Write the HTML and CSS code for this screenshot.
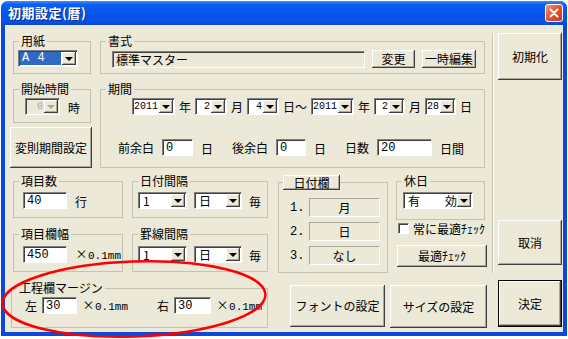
FILE: index.html
```html
<!DOCTYPE html>
<html lang="ja">
<head>
    <meta charset="UTF-8">
    <meta name="viewport" content="width=device-width, initial-scale=1.0">
    <title>初期設定(暦)</title>
    <link rel="stylesheet" href="styles.css">
</head>
<body>
    <div class="window">
        <div class="titlebar">
            <span class="title">初期設定(暦)</span>
            <span class="close">
                <svg width="10" height="10" viewBox="0 0 10 10"><path d="M1.5 1.5L8.5 8.5M8.5 1.5L1.5 8.5" stroke="#fff" stroke-width="2" stroke-linecap="round"/></svg>
            </span>
        </div>

        <div class="client">
            <div class="main">
                <!-- 用紙 / 書式 -->
                <div class="row row-a">
                    <fieldset class="group g-paper">
                        <legend>用紙</legend>
                        <div class="line">
                            <div class="combo w60"><span class="val sel">A 4</span><span class="arrow"></span></div>
                        </div>
                    </fieldset>
                    <fieldset class="group g-format">
                        <legend>書式</legend>
                        <div class="line">
                            <div class="field ro">標準マスター</div>
                            <button class="btn b-change">変更</button>
                            <button class="btn b-temp">一時編集</button>
                        </div>
                    </fieldset>
                </div>

                <!-- 開始時間 / 期間 -->
                <div class="row row-b">
                    <div class="col col-left">
                        <fieldset class="group g-start">
                            <legend>開始時間</legend>
                            <div class="line">
                                <div class="combo dis w35"><span class="val num">0</span><span class="arrow"></span></div>
                                <span class="unit">時</span>
                            </div>
                        </fieldset>
                        <button class="btn b-irregular">変則期間設定</button>
                    </div>
                    <fieldset class="group g-period">
                        <legend>期間</legend>
                        <div class="line period-top">
                            <div class="combo w43"><span class="val num">2011</span><span class="arrow"></span></div>
                            <span>年</span>
                            <div class="combo w32"><span class="val num">2</span><span class="arrow"></span></div>
                            <span>月</span>
                            <div class="combo w32"><span class="val num">4</span><span class="arrow"></span></div>
                            <span>日～</span>
                            <div class="combo w43"><span class="val num">2011</span><span class="arrow"></span></div>
                            <span>年</span>
                            <div class="combo w31"><span class="val num">2</span><span class="arrow"></span></div>
                            <span>月</span>
                            <div class="combo w31"><span class="val num">28</span><span class="arrow"></span></div>
                            <span>日</span>
                        </div>
                        <div class="line period-bottom">
                            <span>前余白</span>
                            <div class="field w31">0</div>
                            <span class="unit">日</span>
                            <span class="sp">後余白</span>
                            <div class="field w30">0</div>
                            <span class="unit">日</span>
                            <span class="sp">日数</span>
                            <div class="field w55">20</div>
                            <span class="unit">日間</span>
                        </div>
                    </fieldset>
                </div>

                <!-- 項目 / 間隔 / 日付欄 / 休日 -->
                <div class="row row-c">
                    <div class="col col-1">
                        <fieldset class="group g-top">
                            <legend>項目数</legend>
                            <div class="line in-1">
                                <div class="field w44">40</div>
                                <span class="unit">行</span>
                            </div>
                        </fieldset>
                        <fieldset class="group g-bottom">
                            <legend>項目欄幅</legend>
                            <div class="line in-1">
                                <div class="field w44">450</div>
                                <span class="unit mm"><span class="x">×</span><span class="num">0.1mm</span></span>
                            </div>
                        </fieldset>
                    </div>
                    <div class="col col-2">
                        <fieldset class="group g-top">
                            <legend>日付間隔</legend>
                            <div class="line in-2">
                                <div class="combo w49"><span class="val left">1</span><span class="arrow"></span></div>
                                <div class="combo w48"><span class="val left">日</span><span class="arrow"></span></div>
                                <span class="unit">毎</span>
                            </div>
                        </fieldset>
                        <fieldset class="group g-bottom">
                            <legend>罫線間隔</legend>
                            <div class="line in-2">
                                <div class="combo w49"><span class="val left">1</span><span class="arrow"></span></div>
                                <div class="combo w48"><span class="val left">日</span><span class="arrow"></span></div>
                                <span class="unit">毎</span>
                            </div>
                        </fieldset>
                    </div>
                    <fieldset class="group g-datecol">
                        <legend><button class="btn b-datecol">日付欄</button></legend>
                        <div class="drow"><span class="dnum">1.</span><span class="dbox">月</span></div>
                        <div class="drow"><span class="dnum">2.</span><span class="dbox">日</span></div>
                        <div class="drow"><span class="dnum">3.</span><span class="dbox">なし</span></div>
                    </fieldset>
                    <div class="col col-4">
                        <fieldset class="group g-holiday">
                            <legend>休日</legend>
                            <div class="line in-4">
                                <div class="combo w70"><span class="val left spread"><span>有</span><span>効</span></span><span class="arrow"></span></div>
                            </div>
                        </fieldset>
                        <div class="check-row"><span class="chk"></span><span>常に最適ﾁｪｯｸ</span></div>
                        <button class="btn b-optimal">最適ﾁｪｯｸ</button>
                    </div>
                </div>

                <!-- 工程欄マージン / 設定ボタン -->
                <div class="row row-d">
                    <fieldset class="group g-margin">
                        <legend>工程欄マージン</legend>
                        <div class="line in-m">
                            <span>左</span>
                            <div class="field w35">30</div>
                            <span class="unit mm"><span class="x">×</span><span class="num">0.1mm</span></span>
                            <span class="right-label">右</span>
                            <div class="field w37">30</div>
                            <span class="unit mm"><span class="x">×</span><span class="num">0.1mm</span></span>
                        </div>
                    </fieldset>
                    <button class="btn b-font">フォントの設定</button>
                    <button class="btn b-size">サイズの設定</button>
                </div>
            </div>

            <div class="sep"></div>

            <div class="side">
                <button class="btn b-init">初期化</button>
                <button class="btn b-cancel">取消</button>
                <button class="btn b-ok default">決定</button>
            </div>
        </div>
    </div>

    <svg class="mark" width="568" height="339" viewBox="0 0 568 339">
        <ellipse cx="134" cy="299" rx="131.5" ry="37.5" transform="rotate(-2 134 299)" fill="none" stroke="#ff0000" stroke-width="2.5"/>
    </svg>
</body>
</html>
```

FILE: styles.css
```css
* {
    box-sizing: border-box;
}
body {
    margin: 0;
    width: 568px;
    height: 339px;
    overflow: hidden;
    position: relative;
    background: #fff;
    font-family: "Noto Sans CJK JP", sans-serif;
    font-size: 12px;
    line-height: 14px;
    color: #000;
}
.window {
    margin: 1px 0 0 1px;
    width: 566px;
    height: 335px;
    background: #0a49dc;
    border-radius: 7px 7px 0 0;
    display: flex;
    flex-direction: column;
}
.titlebar {
    flex: none;
    height: 24px;
    display: flex;
    align-items: center;
    padding: 0 4px 0 7px;
    border-radius: 7px 7px 0 0;
    background: linear-gradient(#3d8efb, #0a5ef0 15%, #0556ec 50%, #0a52e4 85%, #0647d2);
}
.title {
    color: #fff;
    font-weight: bold;
    font-size: 13px;
    letter-spacing: 0.5px;
    text-shadow: 1px 1px 0 #0a2a8a;
}
.close {
    margin-left: auto;
    width: 18px;
    height: 18px;
    border: 1px solid #fff;
    border-radius: 3px;
    background: linear-gradient(135deg, #f29a7e, #e5532f 45%, #c63a1c);
    display: flex;
    align-items: center;
    justify-content: center;
}
.client {
    flex: 1;
    margin: 0 4px 4px;
    background: #ece9d8;
    display: flex;
    padding: 8px 0 0 5px;
}
.main {
    width: 477px;
    display: flex;
    flex-direction: column;
}
.row {
    flex: none;
    display: flex;
}
.row-a { margin-top: 1px; height: 40px; }
.row-b { margin-top: 8px; height: 86px; }
.row-c { margin-top: 6px; height: 99px; }
.row-d { margin-top: 8px; height: 47px; }
.col {
    display: flex;
    flex-direction: column;
}
.line {
    display: flex;
    align-items: center;
}

/* group boxes */
.group {
    margin: 0;
    padding: 0;
    min-width: 0;
    border: 1px solid #c5c2b2;
}
.group legend {
    margin-left: 5px;
    padding: 0 2px;
    line-height: 14px;
}
.g-paper { margin-left: 3px; width: 78px; height: 40px; padding-top: 2px; }
.g-paper .line { padding-left: 4px; }
.g-format { margin-left: 9px; width: 385px; height: 40px; padding-top: 2px; }
.g-format .line { padding-left: 11px; }
.col-left { width: 82px; }
.g-start { margin-left: 3px; width: 78px; height: 41px; padding-top: 2px; }
.g-start .line { padding-left: 11px; gap: 8px; }
.g-period { margin-left: 8px; width: 385px; height: 86px; padding-top: 2px; }
.period-top { padding-left: 31px; gap: 4px; }
.period-bottom { margin-top: 24px; padding-left: 17px; gap: 8px; }
.sp { margin-left: 11px; }
.col-1 { margin-left: 3px; width: 110px; }
.col-2 { margin-left: 9px; width: 136px; }
.g-top { height: 44px; padding-top: 4px; }
.g-bottom { margin-top: 9px; height: 45px; padding-top: 5px; }
.in-1 { padding-left: 9px; gap: 8px; }
.in-2 { padding-left: 5px; gap: 7px; }
.g-datecol { margin-left: 10px; margin-top: 1px; width: 110px; height: 98px; padding-top: 8px; }
.g-datecol legend { margin-left: 4px; padding: 0; }
.col-4 { margin-left: 8px; width: 91px; }
.g-holiday { width: 89px; height: 46px; padding-top: 4px; }
.in-4 { padding-left: 6px; }
.g-margin { margin-left: 1px; width: 257px; height: 47px; padding-top: 2px; }
.in-m { padding-left: 13px; gap: 5px; }
.right-label { margin-left: 24px; }

/* buttons */
.btn {
    margin: 0;
    padding: 0;
    border: none;
    font: inherit;
    color: #000;
    background: #ece9d8;
    box-shadow: inset -1px -1px #404040, inset 1px 1px #fff, inset -2px -2px #aca899;
}
.btn.default {
    border: 1px solid #000;
}
.b-change { margin-left: 7px; width: 43px; height: 18px; }
.b-temp { margin-left: 7px; width: 54px; height: 18px; }
.b-irregular { margin-top: 4px; width: 82px; height: 41px; }
.b-datecol { width: 57px; height: 15px; line-height: 13px; }
.b-optimal { margin-top: 11px; margin-left: 1px; width: 90px; height: 22px; }
.b-font { margin-left: 22px; margin-top: 4px; width: 95px; height: 42px; }
.b-size { margin-left: 5px; margin-top: 4px; width: 97px; height: 43px; }
.sep {
    margin-left: 5px;
    width: 2px;
    height: 240px;
    border-left: 1px solid #c5c2b2;
    border-right: 1px solid #fff;
}
.side {
    margin-left: 4px;
    width: 64px;
    display: flex;
    flex-direction: column;
}
.b-init { height: 47px; }
.b-cancel { margin-top: 140px; height: 45px; }
.b-ok { margin-top: 15px; height: 47px; }

/* combo boxes */
.combo {
    flex: none;
    display: flex;
    height: 17px;
    padding: 1px;
    background: #fff;
    border: 1px solid;
    border-color: #808080 #fff #fff #808080;
    box-shadow: inset 1px 1px #404040;
}
.combo .val {
    flex: 1;
    min-width: 0;
    display: flex;
    align-items: center;
    justify-content: flex-end;
    padding: 0 1px 0 1px;
    line-height: 13px;
    white-space: nowrap;
}
.combo .val.left {
    justify-content: flex-start;
    padding-left: 3px;
}
.combo .val.spread {
    justify-content: space-between;
    padding-right: 0;
}
.combo .val.sel {
    justify-content: flex-start;
    margin-right: 1px;
    padding-left: 2px;
    background: #316ac5;
    color: #fff;
    font-family: "Liberation Mono", monospace;
    letter-spacing: 0.5px;
}
.arrow {
    flex: none;
    width: 14px;
    display: flex;
    align-items: center;
    justify-content: center;
    background: #ece9d8;
    box-shadow: inset -1px -1px #404040, inset 1px 1px #fff, inset -2px -2px #aca899;
}
.arrow::after {
    content: "";
    border-top: 4px solid #000;
    border-left: 4px solid transparent;
    border-right: 4px solid transparent;
}
.combo.dis {
    background: #ece9d8;
}
.combo.dis .val {
    color: #aca899;
}
.combo.dis .arrow::after {
    border-top-color: #aca899;
}
.w30 { width: 30px; }
.w31 { width: 31px; }
.w32 { width: 32px; }
.w35 { width: 35px; }
.w37 { width: 37px; }
.w43 { width: 43px; }
.w44 { width: 44px; }
.w48 { width: 48px; }
.w49 { width: 49px; }
.w55 { width: 55px; }
.w60 { width: 60px; }
.w70 { width: 70px; }
.num {
    font-family: "Liberation Mono", monospace;
    font-size: 10px;
}

/* text fields */
.field {
    flex: none;
    height: 17px;
    padding: 1px 0 0 3px;
    background: #fff;
    border: 1px solid;
    border-color: #808080 #fff #fff #808080;
    box-shadow: inset 1px 1px #404040;
    font-family: "Liberation Mono", monospace;
    font-size: 12px;
    line-height: 14px;
}
.field.ro {
    width: 253px;
    padding-left: 3px;
    background: #ece9d8;
    font-family: "Noto Sans CJK JP", sans-serif;
}
.unit {
    align-self: flex-end;
}
.mm {
    display: flex;
    align-items: baseline;
}
.mm .x {
    width: 13px;
    text-align: center;
}
.mm .num {
    font-size: 11px;
}

/* date column */
.drow {
    display: flex;
    align-items: center;
    padding-left: 11px;
}
.drow + .drow {
    margin-top: 5px;
}
.dnum {
    width: 19px;
    font-family: "Liberation Mono", monospace;
}
.dbox {
    width: 71px;
    height: 19px;
    display: flex;
    align-items: center;
    justify-content: center;
    border: 1px solid;
    border-color: #aca899 #fff #fff #aca899;
}

/* check box */
.check-row {
    margin-top: 3px;
    height: 11px;
    display: flex;
    align-items: center;
    padding-left: 2px;
    gap: 4px;
    white-space: nowrap;
}
.chk {
    flex: none;
    width: 11px;
    height: 11px;
    background: #fff;
    border: 1px solid;
    border-color: #808080 #fff #fff #808080;
    box-shadow: inset 1px 1px #404040;
}

.mark {
    position: absolute;
    left: 0;
    top: 0;
    pointer-events: none;
}
```
